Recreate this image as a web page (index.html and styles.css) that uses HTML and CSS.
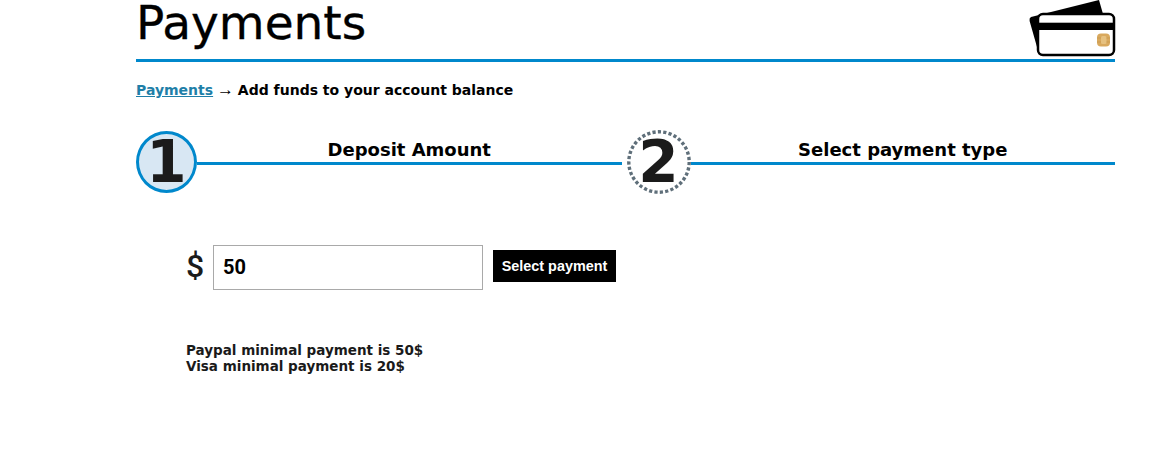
FILE: index.html
```html
<!DOCTYPE html>
<html lang="en">
<head>
<meta charset="utf-8">
<title>Payments</title>
<link rel="stylesheet" href="styles.css">
</head>
<body>
<main class="page">
  <header class="head">
    <h1 class="title">Payments</h1>
    <svg class="card-icon" width="87" height="57" viewBox="0 0 87 57" aria-hidden="true">
      <path d="M2 17 L70 0 L74 14 L20 30 L10 54 L0.600 21 Q0 18 2 17 Z" fill="#000"/>
      <rect x="9" y="14" width="76" height="41" rx="5" fill="#fff" stroke="#000" stroke-width="2.500"/>
      <rect x="9" y="22.700" width="76" height="7.300" fill="#000"/>
      <rect x="68" y="33.500" width="13" height="13" rx="4" fill="#d9a95e"/>
      <rect x="72" y="36" width="5.500" height="8" rx="1.500" fill="#e6c180"/>
      <path d="M68 38 H72 M68 42 H72 M77.500 38 H81 M77.500 42 H81" stroke="#c4964c" stroke-width="0.700" fill="none"/>
    </svg>
  </header>

  <p class="crumbs"><a class="crumb-link" href="#">Payments</a> <span class="arrow">→</span> Add funds to your account balance</p>

  <ol class="steps">
    <li class="step"><span class="num num-active">1</span></li>
    <li class="step-label"><span>Deposit Amount</span></li>
    <li class="step">
      <span class="num num-next">2
        <svg class="ring" width="64" height="64" viewBox="0 0 64 64" aria-hidden="true">
          <circle cx="32" cy="32" r="30.200" fill="none" stroke="#5f6f7a" stroke-width="3.400" stroke-dasharray="3.200 2.220"/>
        </svg>
      </span>
    </li>
    <li class="step-label"><span>Select payment type</span></li>
  </ol>

  <form class="amount">
    <span class="currency">$</span>
    <input class="amount-input" type="text" value="50">
    <button class="submit" type="button">Select payment</button>
  </form>

  <p class="note">Paypal minimal payment is 50$<br>Visa minimal payment is 20$</p>
</main>
</body>
</html>
```
FILE: styles.css
```css
* { box-sizing: border-box; }
html, body { margin: 0; padding: 0; background: #fff; overflow: hidden; }
body { font-family: "DejaVu Sans", sans-serif; color: #000; }
.page { width: 979px; margin-left: 136px; }
.head {
  height: 62px;
  border-bottom: 3px solid #0088cc;
  display: flex;
  justify-content: space-between;
  align-items: flex-end;
}
.title {
  margin: 0 0 13px;
  font-family: "DejaVu Sans", sans-serif;
  font-weight: 400;
  font-size: 47px;
  line-height: 46px;
  -webkit-text-stroke: 0.3px #000;
}
.card-icon { display: block; margin: 0 -1px 2px 0; }
.crumbs {
  margin: 19px 0 0;
  font-size: 14px;
  line-height: 18px;
  font-weight: 700;
}
.crumb-link { color: #1f7fa8; }
.arrow { font-family: "Liberation Sans", sans-serif; font-weight: 700; font-size: 17px; margin: 0 -1px; }
.steps {
  list-style: none;
  margin: 32px 0 0;
  padding: 0;
  display: flex;
  height: 62px;
}
.step { flex: none; display: flex; align-items: center; }
.step-label {
  flex: 1;
  height: 34px;
  padding-top: 1px;
  border-bottom: 3px solid #0088cc;
  text-align: center;
  font-size: 18px;
  line-height: 36px;
  font-weight: 700;
}
.num {
  display: flex;
  align-items: center;
  justify-content: center;
  border-radius: 50%;
  font-weight: 700;
  color: #1b1b1b;
  font-size: 58px;
  line-height: 1;
}
.num-active { width: 61px; height: 62px; background: #d8e7f3; border: 3px solid #0088cc; }
.num-next { position: relative; width: 64px; height: 64px; margin: -1px 0 0 5px; background: #fff; }
.ring { position: absolute; inset: 0; }
.amount {
  margin: 52px 0 0 50px;
  display: flex;
  align-items: flex-start;
}
.currency { width: 27px; font-size: 32px; line-height: 43px; color: #1b1b1b; font-family: "Roboto", sans-serif; font-weight: 500; }
.amount-input {
  width: 270px;
  height: 45px;
  border: 1px solid #a9a9a9;
  padding: 0 9px 2px;
  font-family: "Roboto", sans-serif;
  font-weight: 700;
  font-size: 20px;
  color: #000;
  background: #fff;
  border-radius: 0;
  outline: none;
}
.submit {
  margin: 5px 0 0 10px;
  width: 123px;
  height: 32px;
  border: 0;
  padding: 0;
  background: #000;
  color: #fff;
  font-family: "Liberation Sans", sans-serif;
  font-weight: 700;
  font-size: 14.400px;
}
.note {
  margin: 52px 0 0 50px;
  font-size: 13.500px;
  line-height: 16px;
  font-weight: 700;
  color: #1a1a1a;
}
```
